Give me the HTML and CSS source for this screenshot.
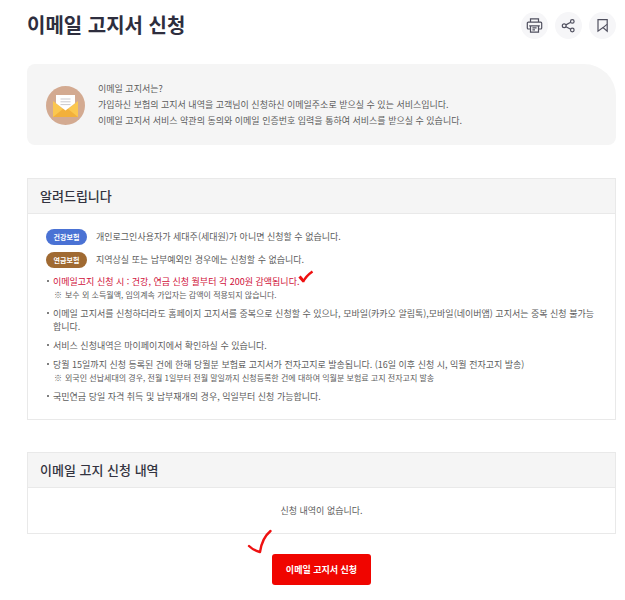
FILE: index.html
```html
<!DOCTYPE html>
<html lang="ko">
<head>
    <meta charset="UTF-8">
    <meta name="viewport" content="width=device-width, initial-scale=1.0">
    <title>이메일 고지서 신청</title>
    <link rel="stylesheet" href="styles.css">
</head>
<body>
    <main class="container">
        <header class="page-header">
            <h1>이메일 고지서 신청</h1>
            <div class="tools">
                <button type="button" class="tool-button" aria-label="인쇄">
                    <svg width="17" height="17" viewBox="0 0 17 17" fill="none" stroke="#50505f" stroke-width="1.2">
                        <path d="M4.5 5V1.8h8V5M4.5 12H2.2a.9.9 0 0 1-.9-.9V6.2a1 1 0 0 1 1-1h12.4a1 1 0 0 1 1 1v4.9a.9.9 0 0 1-.9.9h-2.3"/>
                        <path d="M3.2 8.8h10.6M4.5 8.8v6.4h8V8.8M6.4 10.9h4.2M6.4 12.8h2.6"/>
                    </svg>
                </button>
                <button type="button" class="tool-button" aria-label="공유">
                    <svg width="17" height="17" viewBox="0 0 17 17" fill="none" stroke="#50505f" stroke-width="1.2">
                        <circle cx="4.2" cy="8.8" r="1.9"/>
                        <circle cx="12.3" cy="4.4" r="1.8"/>
                        <circle cx="12.3" cy="13" r="1.8"/>
                        <path d="M5.9 7.9l4.8-2.6M5.9 9.7l4.8 2.5"/>
                    </svg>
                </button>
                <button type="button" class="tool-button" aria-label="즐겨찾기">
                    <svg width="17" height="17" viewBox="0 0 17 17" fill="none" stroke="#50505f" stroke-width="1.2">
                        <path d="M4 2.6h9.2v11.6L9 10.6 4 14.2z"/>
                        <path d="M9 10.600L13 7.400"/>
                    </svg>
                </button>
            </div>
        </header>

        <section class="intro">
            <svg class="intro-icon" width="39" height="39" viewBox="0 0 39 39">
                <circle cx="19.5" cy="19.5" r="19.5" fill="#d3aa91"/>
                <path d="M7 15l12.5 9.5L32 15v16H7z" fill="#fbc74f"/>
                <path d="M7 31l10.5-8.500q2-1.400 4 0L32 31z" fill="#f2b03b"/>
                <path d="M10 9h19v8.300l-9.500 7.200L10 17.300z" fill="#fff"/>
                <path d="M14.500 13h10M14.500 15.800h10M14.500 18.600h10" stroke="#c9c9cf" stroke-width="1"/>
            </svg>
            <p>
                이메일 고지서는?<br>
                가입하신 보험의 고지서 내역을 고객님이 신청하신 이메일주소로 받으실 수 있는 서비스입니다.<br>
                이메일 고지서 서비스 약관의 동의와 이메일 인증번호 입력을 통하여 서비스를 받으실 수 있습니다.
            </p>
        </section>

        <section class="panel">
            <h2>알려드립니다</h2>
            <div class="panel-body">
                <p class="badge-row"><span class="badge health">건강보험</span>개인로그인사용자가 세대주(세대원)가 아니면 신청할 수 없습니다.</p>
                <p class="badge-row"><span class="badge pension">연금보험</span>지역상실 또는 납부예외인 경우에는 신청할 수 없습니다.</p>
                <ul class="notice-list">
                    <li>
                        <span class="highlight">이메일고지 신청 시 : 건강, 연금 신청 월부터 각 200원 감액됩니다.
                            <svg class="check" width="16" height="14" viewBox="0 0 16 14" fill="none" stroke="#ee1111">
                                <path d="M1.500 6.500L5.800 11.500" stroke-width="3"/>
                                <path d="M5 12Q8 6 14.500 1.500" stroke-width="2.400"/>
                            </svg>
                        </span>
                        <p class="note">보수 외 소득월액, 임의계속 가입자는 감액이 적용되지 않습니다.</p>
                    </li>
                    <li>이메일 고지서를 신청하더라도 홈페이지 고지서를 중복으로 신청할 수 있으나, 모바일(카카오 알림톡),모바일(네이버앱) 고지서는 중복 신청 불가능합니다.</li>
                    <li>서비스 신청내역은 마이페이지에서 확인하실 수 있습니다.</li>
                    <li>
                        당월 15일까지 신청 등록된 건에 한해 당월분 보험료 고지서가 전자고지로 발송됩니다. (16일 이후 신청 시, 익월 전자고지 발송)
                        <p class="note">외국인 선납세대의 경우, 전월 1일부터 전월 말일까지 신청등록한 건에 대하여 익월분 보험료 고지 전자고지 발송</p>
                    </li>
                    <li>국민연금 당일 자격 취득 및 납부재개의 경우, 익일부터 신청 가능합니다.</li>
                </ul>
            </div>
        </section>

        <section class="panel">
            <h2>이메일 고지 신청 내역</h2>
            <p class="empty">신청 내역이 없습니다.</p>
        </section>

        <div class="actions">
            <button type="button" class="apply-button">이메일 고지서 신청
                <svg class="pen-check" width="26" height="26" viewBox="0 0 26 26" fill="none" stroke="#ee1111" stroke-width="2.4" stroke-linecap="round" stroke-linejoin="round">
                    <path d="M2 17Q6 21 13 23Q15 9 23.5 2"/>
                </svg>
            </button>
        </div>
    </main>
</body>
</html>
```

FILE: styles.css
```css
* {
    box-sizing: border-box;
}

body {
    margin: 0;
    background-color: #fff;
    color: #5c5c5c;
    font-family: "Noto Sans CJK KR", sans-serif;
    font-size: 9px;
    line-height: 13px;
}

h1, h2, p, ul {
    margin: 0;
    padding: 0;
}

button {
    padding: 0;
    border: none;
    font-family: inherit;
    cursor: pointer;
}

.container {
    padding: 10px 9px 14px 27px;
}

.page-header {
    display: flex;
    justify-content: space-between;
    align-items: center;
    height: 30px;
    margin-bottom: 24px;
}

h1 {
    color: #2e2e3e;
    font-size: 20px;
    font-weight: bold;
    line-height: 28px;
}

.tools {
    display: flex;
    gap: 7px;
}

.tool-button {
    display: flex;
    align-items: center;
    justify-content: center;
    width: 27px;
    height: 27px;
    border-radius: 50%;
    background-color: #f6f6f8;
}

.intro {
    display: flex;
    align-items: center;
    gap: 13px;
    margin-bottom: 33px;
    padding: 17px 19px 16px;
    border-radius: 8px 32px 8px 8px;
    background-color: #f5f5f5;
    line-height: 16px;
}

.intro-icon {
    flex: none;
}

.panel {
    margin-bottom: 32px;
    border: 1px solid #e9e9e9;
}

h2 {
    padding: 0 12px 1px;
    border-bottom: 1px solid #e9e9e9;
    background-color: #f5f5f5;
    color: #333340;
    font-size: 13px;
    font-weight: 500;
    line-height: 33px;
}

.panel-body {
    padding: 15px 17px 16px 18px;
}

.badge-row {
    display: flex;
    align-items: center;
    gap: 9px;
    margin-bottom: 7px;
    line-height: 16px;
}

.badge {
    flex: none;
    width: 41px;
    border-radius: 8px;
    color: #fff;
    font-size: 7px;
    font-weight: bold;
    text-align: center;
}

.health {
    background-color: #4a72d4;
}

.pension {
    background-color: #a06a32;
}

.notice-list {
    list-style: none;
}

.notice-list li {
    position: relative;
    margin-top: 6px;
    padding-left: 7px;
}

.notice-list li::before {
    content: "";
    position: absolute;
    top: 5px;
    left: 1px;
    width: 2px;
    height: 2px;
    border-radius: 50%;
    background-color: #555;
}

.highlight {
    position: relative;
    color: #d0103a;
}

.check {
    position: absolute;
    right: -15px;
    bottom: 4px;
}

.note {
    padding-left: 12px;
    font-size: 8px;
    text-indent: -11px;
}

.note::before {
    content: "※";
    display: inline-block;
    width: 11px;
    text-indent: 0;
}

.empty {
    padding: 16px;
    text-align: center;
}

.actions {
    margin-top: -12px;
    text-align: center;
}

.apply-button {
    position: relative;
    padding: 0 14px;
    border-radius: 3px;
    background-color: #f00500;
    color: #fff;
    font-size: 9px;
    font-weight: bold;
    line-height: 31px;
}

.pen-check {
    position: absolute;
    top: -25px;
    left: -25px;
}
```
